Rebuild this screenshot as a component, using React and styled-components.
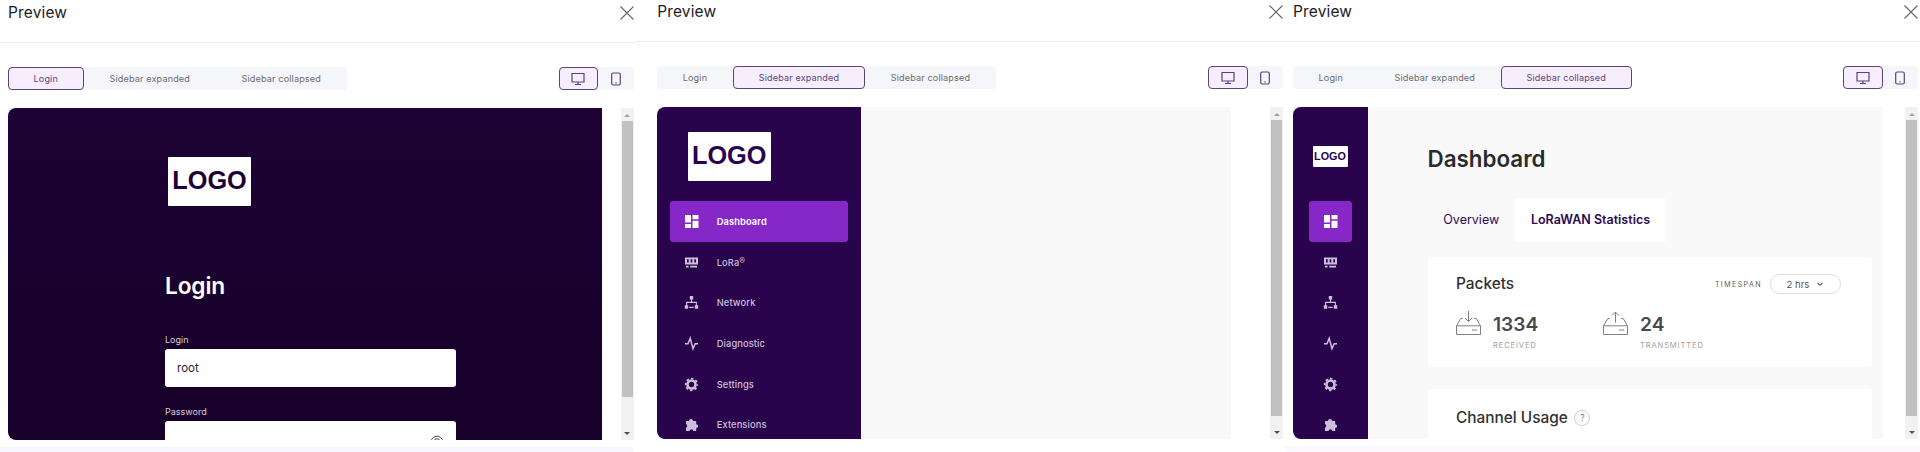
import React from "react";
import styled, { createGlobalStyle, css } from "styled-components";

const Global = createGlobalStyle`
  * { box-sizing: border-box; }
  body { margin: 0; background: #fff; font-family: Inter, "Liberation Sans", sans-serif; color: #222; }
  button { font-family: inherit; margin: 0; }
`;

const Page = styled.div`
  display: flex;
  width: 1920px;
  height: 452px;
  overflow: hidden;
`;

const Panel = styled.section`
  display: flex;
  flex-direction: column;
  flex: none;
  width: ${(p) => p.$w}px;
  height: 452px;
  padding-top: ${(p) => p.$top || 0}px;
`;

const Header = styled.header`
  display: flex;
  justify-content: space-between;
  align-items: flex-start;
  height: 42px;
  flex: none;
  border-bottom: 1.5px solid #ededf0;
  padding: 0 ${(p) => p.$r}px 0 ${(p) => p.$l}px;
`;

const Title = styled.h2`
  margin: 2px 0 0;
  font-size: 15.5px;
  line-height: 20px;
  font-weight: 400;
  letter-spacing: 0.15px;
  color: #1c1c1f;
`;

const CloseIcon = styled.svg`
  width: 14px;
  height: 14px;
  margin-top: 5px;
  fill: none;
  stroke: #66666c;
  stroke-width: 1.1;
`;

const Toolbar = styled.div`
  display: flex;
  justify-content: space-between;
  padding: 24px ${(p) => p.$r}px 0 ${(p) => p.$l}px;
  height: 47px;
  flex: none;
`;

const Segments = styled.div`
  display: flex;
  height: 23px;
  background: #f5f6f9;
  border-radius: 3px;
`;

const Segment = styled.button`
  display: flex;
  align-items: center;
  justify-content: center;
  width: ${(p) => p.$w}px;
  height: 23px;
  padding: 0;
  border: 1.5px solid ${(p) => (p.$on ? "#5d4480" : "transparent")};
  border-radius: 4px;
  background: ${(p) => (p.$on ? "#f6edfd" : "transparent")};
  color: ${(p) => (p.$on ? "#5c4580" : "#6b6c72")};
  font-size: 9.1px;
  letter-spacing: 0.14px;
`;

const DeviceIcon = styled.svg`
  width: 16px;
  height: 16px;
  fill: none;
  stroke: #5a4080;
  stroke-width: 1.2;
`;

const Viewport = styled.div`
  display: flex;
  justify-content: space-between;
  flex: none;
  height: 331.5px;
  margin: 18px ${(p) => p.$r}px 0 ${(p) => p.$l}px;
`;

const Frame = styled.div`
  display: flex;
  width: ${(p) => p.$w}px;
  height: 331.5px;
  overflow: hidden;
  border-radius: 8px 0 0 8px;
  background: #f9f9f9;
`;

const Scrollbar = styled.div`
  display: flex;
  flex-direction: column;
  align-items: center;
  width: 13px;
  background: #f1f1f1;
`;

const Arrow = styled.i`
  width: 0;
  height: 0;
  border-left: 3px solid transparent;
  border-right: 3px solid transparent;
  ${(p) =>
    p.$up
      ? css`
          margin: 6px 0 4px;
          border-bottom: 3px solid #a3a3a3;
        `
      : css`
          margin: auto 0 5px;
          border-top: 3px solid #505050;
        `}
`;

const Thumb = styled.div`
  width: 11px;
  height: ${(p) => p.$h}px;
  background: #c1c1c1;
`;

const Footer = styled.div`
  flex: 1;
  margin-top: 7px;
  margin-left: ${(p) => p.$l || 0}px;
  background: ${(p) => p.$bg};
`;

const LoginScreen = styled.div`
  display: flex;
  flex-direction: column;
  width: 100%;
  padding: 49px 0 0 157px;
  background: linear-gradient(#1d0335, #170029);
`;

const Logo = styled.div`
  display: flex;
  align-items: center;
  justify-content: center;
  flex: none;
  width: ${(p) => (p.$small ? 35 : 83)}px;
  height: ${(p) => (p.$small ? 21 : 49)}px;
  border-radius: 1px;
  background: #fff;
  color: ${(p) => p.$color};
  font: 700 ${(p) => (p.$small ? 10.8 : 25.3)}px/1 "Liberation Sans", Arial, sans-serif;
  padding-bottom: ${(p) => (p.$small ? 1 : 2)}px;
  padding-right: ${(p) => (p.$small ? 1 : 0)}px;
`;

const LoginTitle = styled.h1`
  margin: 64px 0 0;
  font-size: 22.7px;
  line-height: 32px;
  font-weight: 600;
  letter-spacing: -0.15px;
  color: #fff;
`;

const FieldLabel = styled.label`
  margin-top: ${(p) => p.$mt}px;
  font-size: 9px;
  line-height: 12px;
  color: #d6cfdd;
`;

const Field = styled.div`
  display: flex;
  align-items: center;
  justify-content: space-between;
  flex: none;
  width: 291px;
  height: 38px;
  margin-top: 3px;
  padding: 0 12px;
  border-radius: 3px;
  background: #fff;
  font-size: 11.5px;
  color: #2a1845;
`;

const EyeIcon = styled.svg`
  width: 14px;
  height: 14px;
  margin: 4px 0 0 auto;
  fill: none;
  stroke: #55456e;
  stroke-width: 1;
`;

const Sidebar = styled.nav`
  display: flex;
  flex-direction: column;
  flex: none;
  align-items: ${(p) => (p.$slim ? "center" : "stretch")};
  width: ${(p) => (p.$slim ? 75 : 203.5)}px;
  padding: ${(p) => (p.$slim ? "39px 0 0" : "25px 12.5px 0")};
  background: #2a034d;
`;

const NavList = styled.div`
  display: flex;
  flex-direction: column;
  margin-top: ${(p) => (p.$slim ? 34 : 20)}px;
`;

const NavItem = styled.div`
  display: flex;
  align-items: center;
  flex: none;
  gap: 18px;
  justify-content: ${(p) => (p.$slim ? "center" : "flex-start")};
  width: ${(p) => (p.$slim ? "43.5px" : "auto")};
  height: 40.7px;
  padding-left: ${(p) => (p.$slim ? 0 : 14)}px;
  border-radius: 3px;
  background: ${(p) => (p.$on ? "#8627c7" : "transparent")};
  color: ${(p) => (p.$on ? "#fff" : "#cdbfdc")};
  font-size: 9.3px;
  font-weight: ${(p) => (p.$on ? 600 : 500)};
  letter-spacing: 0.12px;

  sup { font-size: 8.5px; font-weight: 400; line-height: 0; vertical-align: 2px; }
`;

const LogoSlot = styled.div`
  display: flex;
  padding-left: ${(p) => p.$l}px;
`;

const NavIcon = styled.svg`
  width: 15px;
  height: 15px;
  fill: currentColor;
  flex: none;
`;

const Content = styled.main`
  display: flex;
  flex-direction: column;
  flex: 1;
  padding: 38px 11px 0 59.5px;
`;

const PageTitle = styled.h1`
  margin: 0;
  font-size: 22.4px;
  line-height: 28px;
  font-weight: 600;
  color: #2b2b2d;
`;

const Tabs = styled.div`
  display: flex;
  margin-top: 25px;
`;

const Tab = styled.div`
  display: flex;
  align-items: center;
  justify-content: center;
  width: ${(p) => p.$w}px;
  height: 43.5px;
  border-radius: 3px;
  background: ${(p) => (p.$on ? "#fff" : "transparent")};
  color: #2e0854;
  font-size: 12.5px;
  font-weight: ${(p) => (p.$on ? 600 : 400)};
`;

const Card = styled.section`
  display: flex;
  flex-direction: column;
  flex: none;
  width: 444px;
  height: 109.5px;
  margin-top: ${(p) => p.$mt}px;
  padding: ${(p) => p.$pt}px 30.5px 0 28.5px;
  border-radius: 4px;
  background: #fff;
`;

const CardHead = styled.div`
  display: flex;
  align-items: center;
  height: 20px;
`;

const CardTitle = styled.h3`
  margin: 0;
  font-size: 15.4px;
  font-weight: 500;
  line-height: 20px;
  color: #303033;
`;

const SpanLabel = styled.span`
  margin: 0 8px 0 auto;
  font-size: 7px;
  letter-spacing: 1.45px;
  color: #5c5c60;
`;

const Select = styled.div`
  display: flex;
  align-items: center;
  gap: 7px;
  width: 71px;
  height: 20px;
  padding-left: 15.5px;
  border: 1px solid #dedee0;
  border-radius: 10px;
  font-size: 9.6px;
  color: #555;
`;

const Chevron = styled.svg`
  width: 8px;
  height: 8px;
  fill: none;
  stroke: #555;
  stroke-width: 1.1;
`;

const Stats = styled.div`
  display: flex;
  margin-top: 17px;
`;

const Stat = styled.div`
  display: flex;
  gap: 12px;
  width: 147px;
`;

const TrayIcon = styled.svg`
  width: 25px;
  height: 25px;
  fill: none;
  stroke: #808083;
  stroke-width: 1;
`;

const StatText = styled.div`
  display: flex;
  flex-direction: column;
`;

const StatValue = styled.strong`
  margin-top: 1px;
  font-size: 19.2px;
  line-height: 24px;
  font-weight: 600;
  color: #48484b;
`;

const StatLabel = styled.span`
  margin-top: 4.5px;
  font-size: 7.6px;
  line-height: 10px;
  letter-spacing: 0.85px;
  color: #a0a0a3;
`;

const Help = styled.span`
  display: flex;
  align-items: center;
  justify-content: center;
  width: 16px;
  height: 16px;
  margin-left: 6.5px;
  border: 1px solid #cfcfd2;
  border-radius: 50%;
  font-size: 8.5px;
  color: #77777b;
`;

const shapes = {
  dashboard: <path d="M1 1h6v7.5H1zM8.5 1h6v4.3h-6zM8.5 6.8h6v7.2h-6zM1 10h6v4H1z" />,
  lora: (
    <path
      fillRule="evenodd"
      d="M1 2.5h13v7H1zM3 4.3v3.2h1.7V4.3zM6.6 4.3v3.2h1.7V4.3zM10.3 4.3v3.2H12V4.3zM2 10.8h2.6v1.6H2zM6.2 10.8H13v1.6H6.2z"
    />
  ),
  network: (
    <path d="M5.8 1h3.4v3.4H8.1v2.3h4.8v3.5h1.3v3.5h-3.4v-3.5h1V7.9H3.2v2.3h1v3.5H.8v-3.5H2V6.7h4.9V4.4H5.8zM5.3 11.7h4.4v1.2H5.3z" />
  ),
  diagnostic: (
    <path d="M1 7.7h3L6.2 2.2 9 12.8l2.2-5.1H14" fill="none" stroke="currentColor" strokeWidth="1.5" />
  ),
  settings: (
    <g fill="none" stroke="currentColor">
      <circle cx="7.5" cy="7.5" r="4" strokeWidth="2.6" />
      <circle cx="7.5" cy="7.5" r="5.8" strokeWidth="1.8" strokeDasharray="2.4 2.155" strokeDashoffset="1.2" />
    </g>
  ),
  extensions: (
    <path d="M2 4h3a2 2 0 0 1 4 0h3.2v3.2a1.9 1.9 0 0 1 0 3.8v2.9H9.4a2 2 0 0 0-3.9 0H2v-3.2a2 2 0 0 0 0-3.7z" />
  ),
};

const nav = [
  ["dashboard", "Dashboard"],
  ["lora", <span key="l">LoRa<sup>®</sup></span>],
  ["network", "Network"],
  ["diagnostic", "Diagnostic"],
  ["settings", "Settings"],
  ["extensions", "Extensions"],
];

function Nav({ slim }) {
  return (
    <Sidebar $slim={slim}>
      <LogoSlot $l={slim ? 0 : 18}>
        <Logo $small={slim} $color="#2a034d">LOGO</Logo>
      </LogoSlot>
      <NavList $slim={slim}>
        {nav.map(([id, label], i) => (
          <NavItem key={id} $on={i === 0} $slim={slim}>
            <NavIcon viewBox="0 0 15 15">{shapes[id]}</NavIcon>
            {!slim && label}
          </NavItem>
        ))}
      </NavList>
    </Sidebar>
  );
}

function Preview({ w, l, r, top, active, frameW, thumb, footer, footerL, children }) {
  const tabs = [["Login", 75.5], ["Sidebar expanded", 132.5], ["Sidebar collapsed", 130.5]];
  return (
    <Panel $w={w} $top={top}>
      <Header $l={l} $r={r}>
        <Title>Preview</Title>
        <CloseIcon viewBox="0 0 14 14"><path d="M.5.5l13 13M13.5.5l-13 13" /></CloseIcon>
      </Header>
      <Toolbar $l={l} $r={r}>
        <Segments>
          {tabs.map(([name, width], i) => (
            <Segment key={name} $w={width} $on={i === active}>{name}</Segment>
          ))}
        </Segments>
        <Segments>
          <Segment $w={39.5} $on>
            <DeviceIcon viewBox="0 0 16 16"><path d="M2 2.5h12v8.500H2zM8 11v2.500M5 13.500h6" /></DeviceIcon>
          </Segment>
          <Segment $w={35.5}>
            <DeviceIcon viewBox="0 0 16 16">
              <rect x="3.7" y="2" width="8.6" height="12" rx="1.5" />
              <path d="M7.4 11.8h1.2" />
            </DeviceIcon>
          </Segment>
        </Segments>
      </Toolbar>
      <Viewport $l={l} $r={r}>
        <Frame $w={frameW}>{children}</Frame>
        <Scrollbar>
          <Arrow $up />
          <Thumb $h={thumb} />
          <Arrow />
        </Scrollbar>
      </Viewport>
      <Footer $bg={footer} $l={footerL} />
    </Panel>
  );
}

export default function App() {
  return (
    <>
      <Global />
      <Page>
        <Preview w={634} l={8} r={0.5} top={1} active={0} frameW={594} thumb={275.5} footer="#f9f7fe">
          <LoginScreen>
            <LogoSlot $l={3}>
              <Logo $color="#1d0335">LOGO</Logo>
            </LogoSlot>
            <LoginTitle>Login</LoginTitle>
            <FieldLabel $mt={32}>Login</FieldLabel>
            <Field>root</Field>
            <FieldLabel $mt={19}>Password</FieldLabel>
            <Field>
              <EyeIcon viewBox="0 0 14 14">
                <path d="M.5 7C3 -.8 11 -.8 13.500 7C11 13 3 13 .5 7z" />
                <circle cx="7" cy="6.500" r="2.800" />
              </EyeIcon>
            </Field>
          </LoginScreen>
        </Preview>
        <Preview w={649} l={23.2} r={0} active={1} frameW={573.5} thumb={296} footer="#fefefe">
          <Nav />
        </Preview>
        <Preview w={637} l={10} r={2} active={2} frameW={589.5} thumb={296} footer="#fbf8fe" footerL={2}>
          <Nav slim />
          <Content>
            <PageTitle>Dashboard</PageTitle>
            <Tabs>
              <Tab $w={87.5}>Overview</Tab>
              <Tab $w={151} $on>LoRaWAN Statistics</Tab>
            </Tabs>
            <Card $mt={15.5} $pt={17}>
              <CardHead>
                <CardTitle>Packets</CardTitle>
                <SpanLabel>TIMESPAN</SpanLabel>
                <Select>
                  2 hrs
                  <Chevron viewBox="0 0 8 8"><path d="M1.5 2.8L4 5.3l2.5-2.5" /></Chevron>
                </Select>
              </CardHead>
              <Stats>
                <Stat>
                  <TrayIcon viewBox="0 0 25 25">
                    <path d="M.5 14.8h24v8.7H.5zM.5 14.8L4.8 7.500h2M24.5 14.8l-4.3-7.300h-2M16 19h5M12.5 0v10.500M9 7l3.500 3.500L16 7" />
                  </TrayIcon>
                  <StatText><StatValue>1334</StatValue><StatLabel>RECEIVED</StatLabel></StatText>
                </Stat>
                <Stat>
                  <TrayIcon viewBox="0 0 25 25">
                    <path d="M.5 14.8h24v8.7H.5zM.5 14.8L4.8 7.500h2M24.5 14.8l-4.3-7.300h-2M16 19h5M12.5 11.500V1M9 4.500L12.500 1 16 4.500" />
                  </TrayIcon>
                  <StatText><StatValue>24</StatValue><StatLabel>TRANSMITTED</StatLabel></StatText>
                </Stat>
              </Stats>
            </Card>
            <Card $mt={22} $pt={19.5}>
              <CardHead>
                <CardTitle>Channel Usage</CardTitle>
                <Help>?</Help>
              </CardHead>
            </Card>
          </Content>
        </Preview>
      </Page>
    </>
  );
}
